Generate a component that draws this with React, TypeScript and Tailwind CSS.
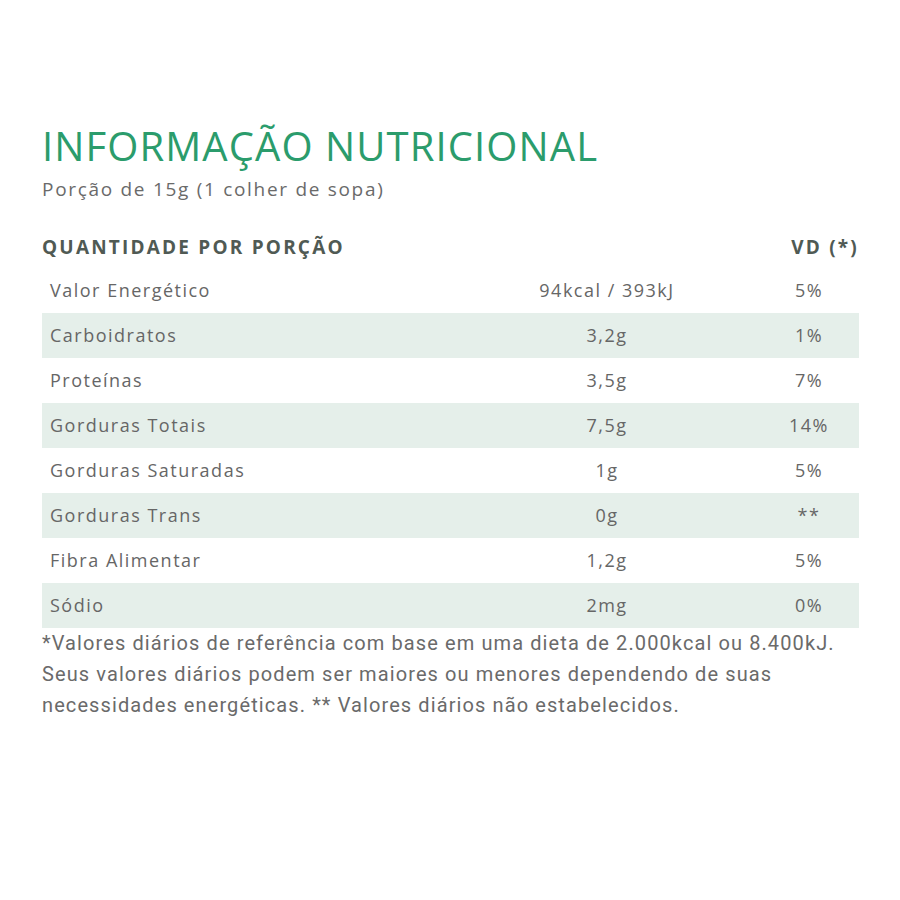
import React from "react";

const rows = [
  { nome: "Valor Energético", qtd: "94kcal / 393kJ", vd: "5%" },
  { nome: "Carboidratos", qtd: "3,2g", vd: "1%" },
  { nome: "Proteínas", qtd: "3,5g", vd: "7%" },
  { nome: "Gorduras Totais", qtd: "7,5g", vd: "14%" },
  { nome: "Gorduras Saturadas", qtd: "1g", vd: "5%" },
  { nome: "Gorduras Trans", qtd: "0g", vd: "**" },
  { nome: "Fibra Alimentar", qtd: "1,2g", vd: "5%" },
  { nome: "Sódio", qtd: "2mg", vd: "0%" },
];

export default function App() {
  return (
    <div className="w-[900px] h-[900px] bg-white font-['Open_Sans',sans-serif] text-[#666]">
      <div className="pl-[42px] pr-[41px] pt-[126px]">
        {/* Título */}
        <h1 className="text-[40px] leading-none font-medium tracking-[1.1px] text-[#2b9c6c]">
          INFORMAÇÃO NUTRICIONAL
        </h1>
        <p className="mt-[10px] text-[19px] leading-[26px] tracking-[1.7px] text-[#6a6a6a]">
          Porção de 15g (1 colher de sopa)
        </p>

        {/* Tabela */}
        <div className="mt-[26px]">
          <div className="flex items-center h-[40px] pb-[2px] text-[19px] font-bold tracking-[2.2px] text-[#505a54]">
            <div className="flex-1">QUANTIDADE POR PORÇÃO</div>
            <div className="w-[100px] text-right">VD (*)</div>
          </div>
          {rows.map((r, i) => (
            <div
              key={r.nome}
              className={
                "flex items-center h-[45px] text-[18px] tracking-[1.5px] " +
                (i % 2 === 1 ? "bg-[#e5efea]" : "bg-white")
              }
            >
              <div className="flex-1 pl-[8px]">{r.nome}</div>
              <div className="w-[200px] text-center">{r.qtd}</div>
              <div className="w-[52px]" />
              <div className="w-[100px] text-center">{r.vd}</div>
            </div>
          ))}
        </div>

        {/* Rodapé */}
        <p className="text-[20px] leading-[31px] font-['Roboto',sans-serif] text-[#6a6a6a] tracking-[1.1px]">
          *Valores diários de referência com base em uma dieta de 2.000kcal ou 8.400kJ.
          <br />
          Seus valores diários podem ser maiores ou menores dependendo de suas
          <br />
          necessidades energéticas. ** Valores diários não estabelecidos.
        </p>
      </div>
    </div>
  );
}
